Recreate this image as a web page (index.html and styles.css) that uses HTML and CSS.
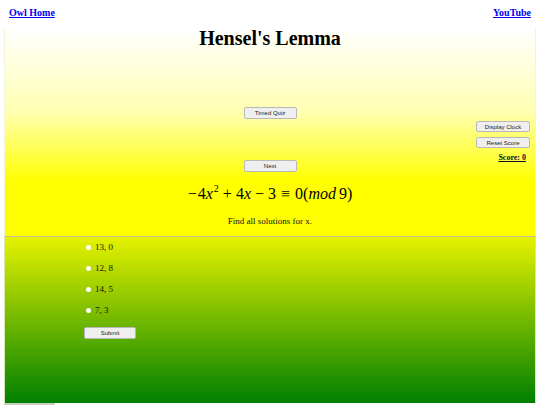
FILE: index.html
```html
<!DOCTYPE html>
<html lang="en">
<head>
<meta charset="utf-8">
<title>Hensel's Lemma</title>
<link rel="stylesheet" href="styles.css">
</head>
<body>
<header class="topbar">
  <a class="toplink" href="#">Owl Home</a>
  <a class="toplink" href="#">YouTube</a>
</header>
<section class="panel-top">
  <h1 class="title">Hensel's Lemma</h1>
  <div class="controls">
    <div class="center-col">
      <button class="btn">Timed Quiz</button>
      <button class="btn btn-next">Next</button>
    </div>
    <div class="side-col">
      <button class="btn btn-side">Display Clock</button>
      <button class="btn btn-side btn-reset">Reset Score</button>
      <div class="score">Score: 0</div>
    </div>
  </div>
  <div class="math">
    <span class="op">−</span>4<i>x</i><sup>2</sup><span class="bin">+</span>4<i>x</i><span class="bin">−</span>3<span class="rel">≡</span>0(<i>mod</i><span class="thin"></span>9)
  </div>
  <p class="prompt">Find all solutions for x.</p>
</section>
<section class="panel-bottom">
  <form class="answers">
    <label class="option"><input type="radio" name="ans" class="radio">13, 0</label>
    <label class="option"><input type="radio" name="ans" class="radio">12, 8</label>
    <label class="option"><input type="radio" name="ans" class="radio">14, 5</label>
    <label class="option"><input type="radio" name="ans" class="radio">7, 3</label>
    <button type="button" class="btn btn-submit">Submit</button>
  </form>
</section>
<div class="footer-strip"></div>
</body>
</html>
```
FILE: styles.css
```css
html, body {
  background: #ffffff;
}
body {
  margin: 4px;
  font-family: "Liberation Serif", "Times New Roman", serif;
  color: #000;
}
.topbar {
  display: flex;
  justify-content: space-between;
  padding: 3px 5px 8px;
}
.toplink {
  font-size: 10px;
  line-height: 12px;
  font-weight: bold;
  color: #0000ee;
  text-decoration: underline;
}
.panel-top {
  background: linear-gradient(#ffffff 0%, #ffffb4 40%, #ffff00 74%, #ffff00 100%);
  border-left: 1px solid #f4f4dc;
  border-right: 1px solid #f4f4dc;
  padding-bottom: 9px;
  text-align: center;
}
.title {
  margin: 0;
  font-size: 20px;
  line-height: 23px;
  font-weight: bold;
}
.controls {
  display: grid;
  grid-template-columns: 1fr 53px 1fr;
  margin-top: 57px;
}
.center-col {
  grid-column: 2;
  display: flex;
  flex-direction: column;
  align-items: center;
}
.side-col {
  grid-column: 3;
  display: flex;
  flex-direction: column;
  align-items: flex-end;
  padding-top: 14px;
  padding-right: 5px;
}
.btn {
  width: 53px;
  height: 12px;
  padding: 0;
  margin: 0;
  box-sizing: border-box;
  background: #efefef;
  border: 1px solid #b9b9b9;
  border-radius: 2px;
  font-family: "Liberation Sans", Arial, sans-serif;
  font-size: 6px;
  line-height: 10px;
  color: #222;
}
.btn-next {
  margin-top: 41px;
}
.btn-side {
  height: 11px;
  width: 54px;
}
.btn-reset {
  margin-top: 5px;
}
.score {
  margin-top: 5px;
  padding-right: 4px;
  font-size: 8px;
  line-height: 10px;
  font-weight: bold;
  text-decoration: underline;
  color: #101030;
}
.math {
  margin-top: 12px;
  font-size: 16px;
  line-height: 20px;
  font-family: "Liberation Serif", "DejaVu Serif", serif;
}
.math i {
  font-style: italic;
}
.math sup {
  font-size: 10px;
  line-height: 0;
  vertical-align: 7px;
  margin-left: 1px;
}
.op {
  margin-right: 1px;
}
.bin {
  margin: 0 4px;
}
.rel {
  margin: 0 5px;
}
.thin {
  display: inline-block;
  width: 3px;
}
.prompt {
  margin: 12px 0 0;
  font-size: 9px;
  line-height: 11px;
  color: #111;
}
.panel-bottom {
  height: 166px;
  background: linear-gradient(#e6f200, #008000);
  border-top: 1px solid #c4c48e;
  border-left: 1px solid #d8e8b0;
  border-right: 1px solid #d8e8b0;
}
.answers {
  display: flex;
  flex-direction: column;
  align-items: flex-start;
  gap: 10px;
  padding: 5px 0 0 79px;
  margin: 0;
}
.option {
  display: flex;
  align-items: center;
  font-size: 9px;
  line-height: 11px;
  color: #1a1a00;
}
.radio {
  appearance: none;
  -webkit-appearance: none;
  width: 5px;
  height: 5px;
  margin: 0 4px 0 2px;
  border-radius: 50%;
  background: #ffffff;
  border: none;
}
.btn-submit {
  margin-top: 1px;
  width: 52px;
  height: 12px;
}
.footer-strip {
  width: 51px;
  height: 8px;
  background: #c9d0c0;
}
```
